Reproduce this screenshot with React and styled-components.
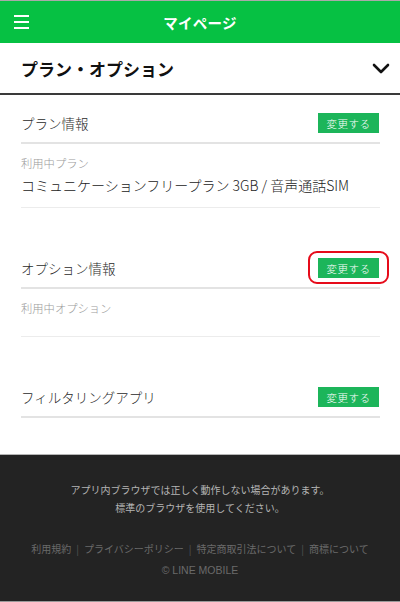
import styled, { createGlobalStyle } from "styled-components";

const GlobalStyle = createGlobalStyle`
  html, body {
    margin: 0;
    padding: 0;
    background: #fff;
  }
  body {
    font-family: "Noto Sans CJK JP", "Noto Sans", sans-serif;
    color: #222;
  }
`;

const Page = styled.div`
  width: 400px;
  min-height: 602px;
  display: flex;
  flex-direction: column;
  border-top: 1px solid #a9a9a9;
  box-sizing: border-box;
`;

const Header = styled.header`
  height: 42px;
  background: #06c143;
  display: flex;
  align-items: center;
  justify-content: center;
  position: relative;
`;

const MenuBtn = styled.div`
  position: absolute;
  left: 14px;
  top: 14px;
  width: 15px;
  display: flex;
  flex-direction: column;
  gap: 4px;

  span {
    display: block;
    height: 2px;
    background: #fff;
  }
`;

const HeaderTitle = styled.h1`
  margin: 0;
  font-size: 14.5px;
  font-weight: 700;
  color: #fff;
  letter-spacing: 0.3px;
`;

const SectionHead = styled.div`
  height: 50px;
  padding: 0 10px 0 21px;
  display: flex;
  align-items: center;
  justify-content: space-between;
  border-bottom: 2px solid #3a3a3a;
`;

const SectionTitle = styled.h2`
  margin: 0;
  font-size: 17px;
  font-weight: 700;
  color: #111;
`;

const Content = styled.main`
  padding: 9px 20px 36px 21px;
  display: flex;
  flex-direction: column;
`;

const Block = styled.section`
  margin-top: ${(p) => p.$gap || 0}px;
`;

const Row = styled.div`
  height: 38px;
  display: flex;
  align-items: center;
  justify-content: space-between;
  border-bottom: 2px solid #e3e3e3;
`;

const RowTitle = styled.div`
  font-size: 13.5px;
  font-weight: 300;
  color: #2a2a2a;
`;

const ChangeBtn = styled.button`
  width: 61px;
  height: 20px;
  margin-right: 1px;
  padding: 0;
  border: none;
  background: #1cb55a;
  color: #fff;
  font-family: inherit;
  font-size: 10.5px;
  font-weight: 300;
  letter-spacing: 0.5px;
  cursor: pointer;
`;

const Marked = styled.div`
  position: relative;
  display: flex;

  &::after {
    content: "";
    position: absolute;
    inset: -7px -9px -6px -10px;
    border: 2px solid #e60b1a;
    border-radius: 9px;
    pointer-events: none;
  }
`;

const Detail = styled.div`
  min-height: ${(p) => p.$min || 0}px;
  padding: 9px 0 10px;
  border-bottom: 1px solid #ececec;
  box-sizing: border-box;
`;

const Label = styled.div`
  font-size: 11.3px;
  font-weight: 300;
  line-height: 20px;
  color: #9a9a9a;
`;

const Value = styled.div`
  font-size: 14px;
  font-weight: 300;
  line-height: 24px;
  color: #222;
`;

const Footer = styled.footer`
  flex: 1;
  background: #232323;
  border-top: 1px solid #b5b5b5;
  border-bottom: 1px solid #9a9a9a;
  padding: 26px 0 24px;
  display: flex;
  flex-direction: column;
  align-items: center;
`;

const Notice = styled.p`
  margin: 0;
  font-size: 10px;
  line-height: 18px;
  color: #b4b4b4;
  text-align: center;
`;

const Links = styled.nav`
  margin-top: 24px;
  display: flex;
  align-items: center;
  font-size: 10px;
  color: #6a6a6a;
`;

const Sep = styled.span`
  margin: 0 5px;
  color: #555;
`;

const Copy = styled.div`
  margin-top: 8px;
  font-family: "Liberation Sans", Arial, sans-serif;
  font-size: 10.5px;
  color: #6a6a6a;
`;

const Chevron = () => (
  <svg width="18" height="11" viewBox="0 0 18 11">
    <path d="M2 2 L9 9 L16 2" fill="none" stroke="#111" strokeWidth="2.6" strokeLinecap="round" strokeLinejoin="round" />
  </svg>
);

const links = ["利用規約", "プライバシーポリシー", "特定商取引法について", "商標について"];

export default function App() {
  return (
    <>
      <GlobalStyle />
      <Page>
        <Header>
          <MenuBtn>
            <span />
            <span />
            <span />
          </MenuBtn>
          <HeaderTitle>マイページ</HeaderTitle>
        </Header>

        <SectionHead>
          <SectionTitle>プラン・オプション</SectionTitle>
          <Chevron />
        </SectionHead>

        <Content>
          <Block>
            <Row>
              <RowTitle>プラン情報</RowTitle>
              <ChangeBtn>変更する</ChangeBtn>
            </Row>
            <Detail>
              <Label>利用中プラン</Label>
              <Value>コミュニケーションフリープラン 3GB / 音声通話SIM</Value>
            </Detail>
          </Block>

          <Block $gap={41}>
            <Row>
              <RowTitle>オプション情報</RowTitle>
              <Marked>
                <ChangeBtn>変更する</ChangeBtn>
              </Marked>
            </Row>
            <Detail $min={48}>
              <Label>利用中オプション</Label>
            </Detail>
          </Block>

          <Block $gap={41}>
            <Row>
              <RowTitle>フィルタリングアプリ</RowTitle>
              <ChangeBtn>変更する</ChangeBtn>
            </Row>
          </Block>
        </Content>

        <Footer>
          <Notice>アプリ内ブラウザでは正しく動作しない場合があります。</Notice>
          <Notice>標準のブラウザを使用してください。</Notice>
          <Links>
            {links.map((l, i) => (
              <span key={l}>
                {i > 0 && <Sep>|</Sep>}
                {l}
              </span>
            ))}
          </Links>
          <Copy>© LINE MOBILE</Copy>
        </Footer>
      </Page>
    </>
  );
}
